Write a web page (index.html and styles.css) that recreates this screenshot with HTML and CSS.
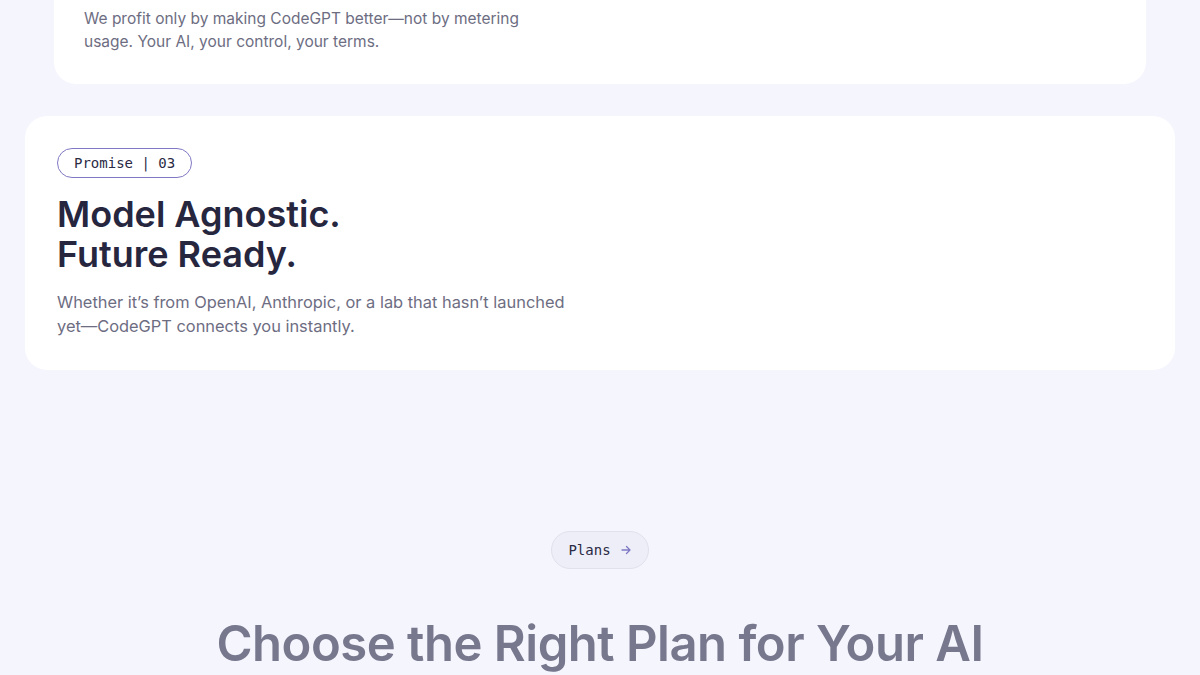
FILE: index.html
```html
<!DOCTYPE html>
<html lang="en">
<head>
    <meta charset="UTF-8">
    <meta name="viewport" content="width=device-width, initial-scale=1.0">
    <title>CodeGPT - Promises and Plans</title>
    <link rel="stylesheet" href="styles.css">
</head>
<body>

<main class="page">
    <!-- Promise cards -->
    <section class="promises">
        <div class="promise-card promise-card--tail">
            <p class="promise-text">We profit only by making CodeGPT better—not by metering<br>usage. Your AI, your control, your terms.</p>
        </div>

        <div class="promise-card">
            <span class="promise-tag">Promise | 03</span>
            <h2 class="promise-title">Model Agnostic.<br>Future Ready.</h2>
            <p class="promise-text">Whether it’s from OpenAI, Anthropic, or a lab that hasn’t launched<br>yet—CodeGPT connects you instantly.</p>
        </div>
    </section>

    <!-- Plans intro -->
    <section class="plans">
        <a class="plans-pill" href="#plans">
            Plans
            <svg class="plans-arrow" width="12" height="12" viewBox="0 0 12 12" fill="none">
                <path d="M2 6h8M6.5 2.5L10 6l-3.5 3.5" stroke="currentColor" stroke-width="1.3" stroke-linecap="round" stroke-linejoin="round"/>
            </svg>
        </a>
        <h2 class="plans-title">Choose the Right Plan for Your AI</h2>
    </section>
</main>

</body>
</html>
```

FILE: styles.css
```css
body {
    margin: 0;
    padding: 0;
    background-color: #f5f5fd;
    font-family: 'Inter', 'Noto Sans', sans-serif;
    color: #26263f;
}

.page {
    display: flex;
    flex-direction: column;
}

.promises {
    display: flex;
    flex-direction: column;
    gap: 32px;
    padding: 0 25px;
}

.promise-card {
    background-color: #ffffff;
    border-radius: 22px;
    padding: 32px;
    display: flex;
    flex-direction: column;
    align-items: flex-start;
}

/* the previous card, scrolled mostly out of view */
.promise-card--tail {
    margin: 0 29px;
    padding: 7px 30px 31px;
    border-radius: 0 0 22px 22px;
}

.promise-tag {
    font-family: 'DejaVu Sans Mono', monospace;
    font-size: 14px;
    line-height: 28px;
    padding: 0 16px;
    border: 1px solid #7f79c4;
    border-radius: 15px;
    color: #2a2a45;
}

.promise-title {
    margin: 16px 0 0;
    font-size: 36px;
    line-height: 40px;
    font-weight: 600;
    color: #26263f;
}

.promise-text {
    margin: 16px 0 0;
    font-size: 16.4px;
    line-height: 24px;
    color: #6d6d82;
}

.promise-card--tail .promise-text {
    margin: 0;
    font-size: 15.5px;
    line-height: 23px;
}

.plans {
    display: flex;
    flex-direction: column;
    align-items: center;
    padding-top: 161px;
}

.plans-pill {
    display: inline-flex;
    align-items: center;
    gap: 9px;
    height: 36px;
    padding: 0 16px;
    background-color: #eeeef8;
    border: 1px solid #e1e1ee;
    border-radius: 19px;
    font-family: 'DejaVu Sans Mono', monospace;
    font-size: 14px;
    color: #2a2a45;
    text-decoration: none;
}

.plans-arrow {
    color: #7f79c4;
}

.plans-title {
    margin: 43px 0 0;
    font-size: 49px;
    line-height: 64px;
    font-weight: 600;
    letter-spacing: -0.01em;
    color: #77778e;
}
```
